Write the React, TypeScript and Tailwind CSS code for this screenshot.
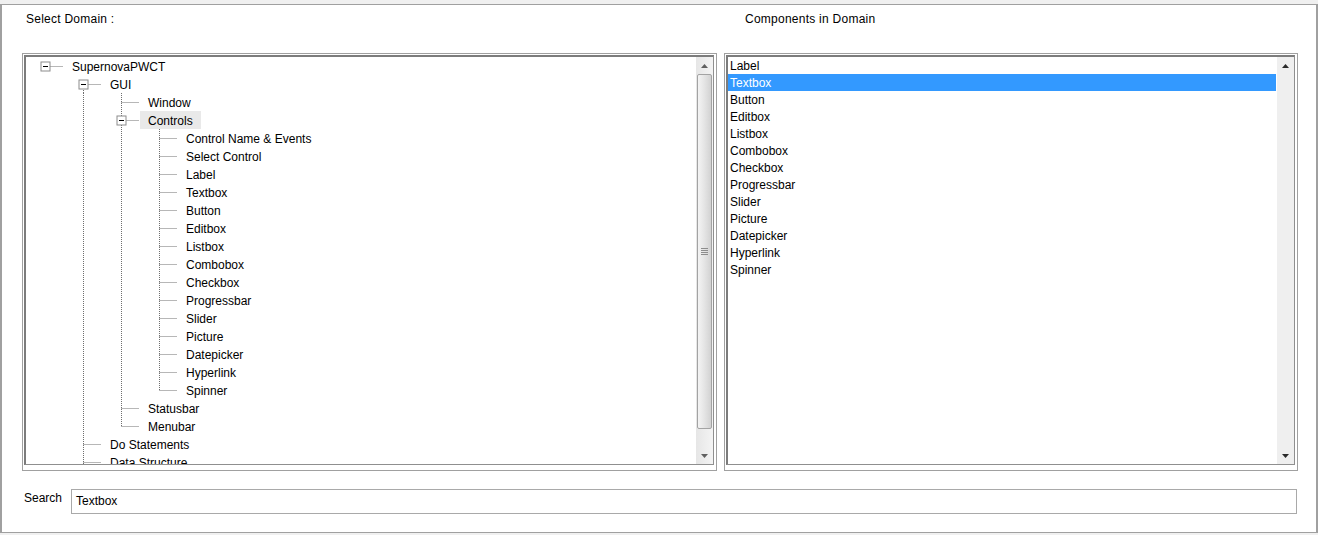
import React from "react";

type Seg = [number, "full" | "top" | "bottom"];
type Row = { label: string; level: number; box?: boolean; v: Seg[]; hl?: boolean };

const L3 = [
  "Control Name & Events",
  "Select Control",
  "Label",
  "Textbox",
  "Button",
  "Editbox",
  "Listbox",
  "Combobox",
  "Checkbox",
  "Progressbar",
  "Slider",
  "Picture",
  "Datepicker",
  "Hyperlink",
  "Spinner",
];

const rows: Row[] = [
  { label: "SupernovaPWCT", level: 0, box: true, v: [] },
  { label: "GUI", level: 1, box: true, v: [[1, "bottom"]] },
  { label: "Window", level: 2, v: [[1, "full"], [2, "full"]] },
  { label: "Controls", level: 2, box: true, hl: true, v: [[1, "full"], [2, "full"]] },
  ...L3.map((l, i) => ({
    label: l,
    level: 3,
    v: [[1, "full"], [2, "full"], [3, i === L3.length - 1 ? "top" : "full"]] as Seg[],
  })),
  { label: "Statusbar", level: 2, v: [[1, "full"], [2, "full"]] },
  { label: "Menubar", level: 2, v: [[1, "full"], [2, "top"]] },
  { label: "Do Statements", level: 1, v: [[1, "full"]] },
  { label: "Data Structure", level: 1, v: [[1, "full"]] },
];

const listItems = [
  "Label",
  "Textbox",
  "Button",
  "Editbox",
  "Listbox",
  "Combobox",
  "Checkbox",
  "Progressbar",
  "Slider",
  "Picture",
  "Datepicker",
  "Hyperlink",
  "Spinner",
];

const DOT = "#6e6e6e";

function TreeRow({ r }: { r: Row }) {
  const lx = (L: number) => 19 + 38 * L + 0.5;
  const w = 38 + 38 * r.level;
  const x = lx(r.level);
  return (
    <div className="flex h-[18px] items-center whitespace-nowrap">
      <svg width={w} height={18} className="shrink-0">
        {r.v.map(([L, t], i) => {
          const y1 = t === "bottom" ? 9 : 0;
          const y2 = t === "top" ? 9.5 : 18;
          return (
            <line
              key={i}
              x1={lx(L)}
              x2={lx(L)}
              y1={y1}
              y2={y2}
              stroke={DOT}
              strokeWidth={1}
              strokeDasharray="1 1"
            />
          );
        })}
        <line
          x1={r.box ? x + 5 : x}
          x2={w - 1}
          y1={9.5}
          y2={9.5}
          stroke={DOT}
          strokeWidth={1}
          strokeDasharray="1 1"
        />
        {r.box && (
          <g>
            <rect x={x - 4.5} y={5} width={9} height={9} fill="#fff" stroke="#8c8c8c" strokeWidth={1} />
            <line x1={x - 2.5} x2={x + 2.5} y1={9.5} y2={9.5} stroke="#000" strokeWidth={1} />
          </g>
        )}
      </svg>
      <span className={"h-[18px] px-[8px] pt-[1px] leading-[18px] " + (r.hl ? "bg-[#e9e9e9]" : "")}>{r.label}</span>
    </div>
  );
}

function Arrow({ up, color }: { up: boolean; color: string }) {
  return (
    <svg width={7} height={4} viewBox="0 0 7 4">
      {up ? <polygon points="0,4 7,4 3.5,0" fill={color} /> : <polygon points="0,0 7,0 3.5,4" fill={color} />}
    </svg>
  );
}

function Frame({ w, children }: { w: string; children: React.ReactNode }) {
  return (
    <div className={w + " h-[418px] border border-[#a0a0a0] pt-[1px] pl-[1px] pr-[2px] pb-[5px]"}>
      <div className="flex h-full w-full overflow-hidden border-t-2 border-l-2 border-r border-b border-t-[#7c7c7c] border-l-[#7c7c7c] border-r-[#8f8f8f] border-b-[#8f8f8f] bg-white">
        {children}
      </div>
    </div>
  );
}

export default function App() {
  return (
    <div
      className="flex h-[535px] w-[1318px] flex-col bg-white text-[12px] text-black"
      style={{ fontFamily: "'Liberation Sans', Arial, sans-serif" }}
    >
      <div className="h-[4px] shrink-0 bg-[#f0f0f0]" />
      <div className="flex h-[529px] shrink-0 flex-col border-t border-b border-l-2 border-r-2 border-[#a0a0a0] bg-white">
        <div className="flex h-[48px] shrink-0 pt-[7px] leading-[14px] tracking-[0.25px]">
          <div className="w-[743px] pl-[24px]">Select Domain :</div>
          <div>Components in Domain</div>
        </div>
        <div className="flex gap-[7px] pl-[20px]">
          <Frame w="w-[695px]">
            <div className="min-w-0 flex-1 overflow-hidden">
              {rows.map((r, i) => (
                <TreeRow key={i} r={r} />
              ))}
            </div>
            <div className="flex w-[17px] shrink-0 flex-col bg-linear-to-r from-[#e6e6e6] to-[#f4f4f4]">
              <div className="flex h-[17px] items-center justify-center">
                <Arrow up color="#606060" />
              </div>
              <div className="mx-[1px] flex h-[355px] items-center justify-center rounded-[2px] border border-[#a3a3a3] bg-linear-to-r from-[#f4f4f4] via-[#e4e4e4] to-[#d2d2d2]">
                <div className="flex w-[7px] flex-col gap-[1px]">
                  <div className="h-[1px] bg-[#8d8d8d]" />
                  <div className="h-[1px] bg-[#8d8d8d]" />
                  <div className="h-[1px] bg-[#8d8d8d]" />
                  <div className="h-[1px] bg-[#8d8d8d]" />
                </div>
              </div>
              <div className="flex-1" />
              <div className="flex h-[17px] items-center justify-center">
                <Arrow up={false} color="#606060" />
              </div>
            </div>
          </Frame>
          <Frame w="w-[574px]">
            <div className="min-w-0 flex-1 pr-[1px]">
              {listItems.map((l, i) => (
                <div
                  key={l}
                  className={
                    "h-[17px] pl-[2px] pt-[1px] leading-[17px] " + (i === 1 ? "bg-[#3399ff] text-white" : "")
                  }
                >
                  {l}
                </div>
              ))}
            </div>
            <div className="flex w-[17px] shrink-0 flex-col bg-[#efefef]">
              <div className="flex h-[17px] items-center justify-center">
                <Arrow up color="#2a2a2a" />
              </div>
              <div className="flex-1" />
              <div className="flex h-[17px] items-center justify-center">
                <Arrow up={false} color="#2a2a2a" />
              </div>
            </div>
          </Frame>
        </div>
        <div className="mt-[18px] flex items-start pl-[22px]">
          <div className="mt-[2px] w-[47px] leading-[14px]">Search</div>
          <div className="flex h-[25px] w-[1226px] items-center border border-[#a9a9a9] pb-[1px] pl-[4px]">Textbox</div>
        </div>
      </div>
      <div className="h-[2px] shrink-0 bg-[#f0f0f0]" />
    </div>
  );
}
